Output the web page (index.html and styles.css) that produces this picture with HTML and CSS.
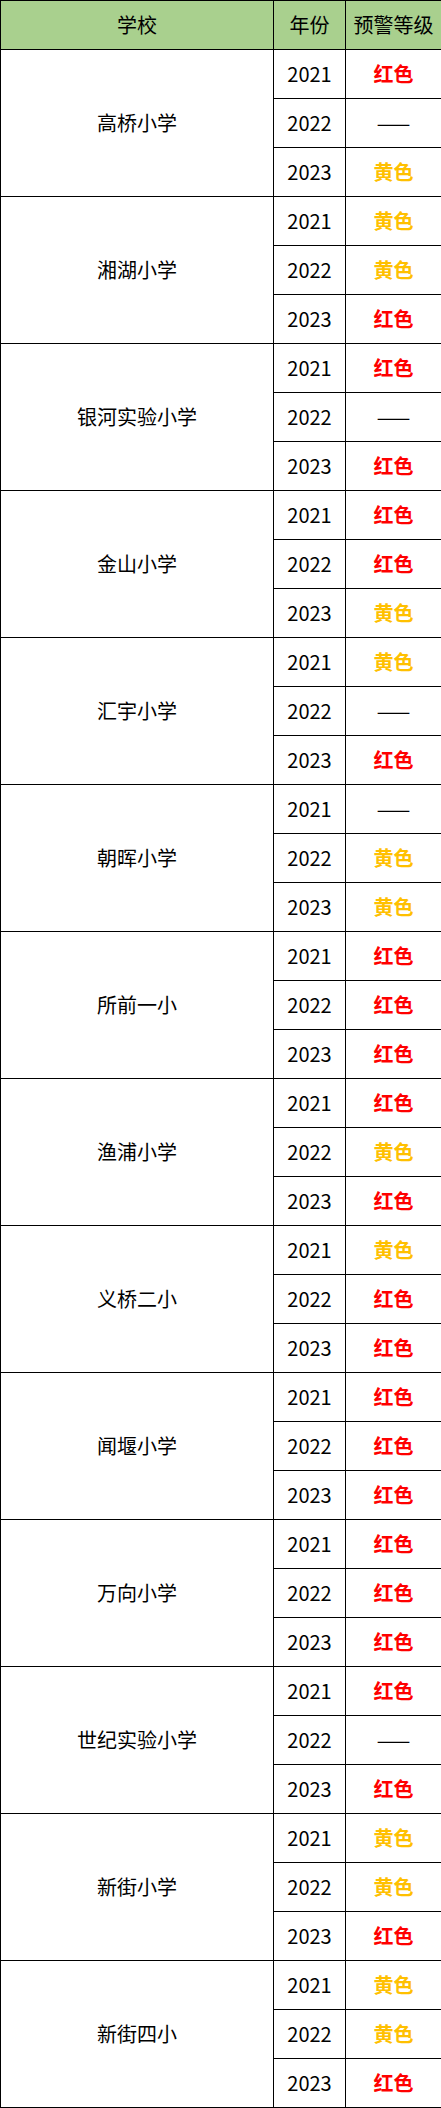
FILE: index.html
```html
<!DOCTYPE html>
<html lang="zh-CN">
<head>
<meta charset="utf-8">
<title>预警等级</title>
<link rel="stylesheet" href="styles.css">
</head>
<body>
<div class="sheet">
  <div class="cell head">学校</div>
  <div class="cell head">年份</div>
  <div class="cell head">预警等级</div>

  <div class="cell school">高桥小学</div>
  <div class="cell year">2021</div><div class="cell lvl red">红色</div>
  <div class="cell year">2022</div><div class="cell lvl none">——</div>
  <div class="cell year">2023</div><div class="cell lvl yellow">黄色</div>

  <div class="cell school">湘湖小学</div>
  <div class="cell year">2021</div><div class="cell lvl yellow">黄色</div>
  <div class="cell year">2022</div><div class="cell lvl yellow">黄色</div>
  <div class="cell year">2023</div><div class="cell lvl red">红色</div>

  <div class="cell school">银河实验小学</div>
  <div class="cell year">2021</div><div class="cell lvl red">红色</div>
  <div class="cell year">2022</div><div class="cell lvl none">——</div>
  <div class="cell year">2023</div><div class="cell lvl red">红色</div>

  <div class="cell school">金山小学</div>
  <div class="cell year">2021</div><div class="cell lvl red">红色</div>
  <div class="cell year">2022</div><div class="cell lvl red">红色</div>
  <div class="cell year">2023</div><div class="cell lvl yellow">黄色</div>

  <div class="cell school">汇宇小学</div>
  <div class="cell year">2021</div><div class="cell lvl yellow">黄色</div>
  <div class="cell year">2022</div><div class="cell lvl none">——</div>
  <div class="cell year">2023</div><div class="cell lvl red">红色</div>

  <div class="cell school">朝晖小学</div>
  <div class="cell year">2021</div><div class="cell lvl none">——</div>
  <div class="cell year">2022</div><div class="cell lvl yellow">黄色</div>
  <div class="cell year">2023</div><div class="cell lvl yellow">黄色</div>

  <div class="cell school">所前一小</div>
  <div class="cell year">2021</div><div class="cell lvl red">红色</div>
  <div class="cell year">2022</div><div class="cell lvl red">红色</div>
  <div class="cell year">2023</div><div class="cell lvl red">红色</div>

  <div class="cell school">渔浦小学</div>
  <div class="cell year">2021</div><div class="cell lvl red">红色</div>
  <div class="cell year">2022</div><div class="cell lvl yellow">黄色</div>
  <div class="cell year">2023</div><div class="cell lvl red">红色</div>

  <div class="cell school">义桥二小</div>
  <div class="cell year">2021</div><div class="cell lvl yellow">黄色</div>
  <div class="cell year">2022</div><div class="cell lvl red">红色</div>
  <div class="cell year">2023</div><div class="cell lvl red">红色</div>

  <div class="cell school">闻堰小学</div>
  <div class="cell year">2021</div><div class="cell lvl red">红色</div>
  <div class="cell year">2022</div><div class="cell lvl red">红色</div>
  <div class="cell year">2023</div><div class="cell lvl red">红色</div>

  <div class="cell school">万向小学</div>
  <div class="cell year">2021</div><div class="cell lvl red">红色</div>
  <div class="cell year">2022</div><div class="cell lvl red">红色</div>
  <div class="cell year">2023</div><div class="cell lvl red">红色</div>

  <div class="cell school">世纪实验小学</div>
  <div class="cell year">2021</div><div class="cell lvl red">红色</div>
  <div class="cell year">2022</div><div class="cell lvl none">——</div>
  <div class="cell year">2023</div><div class="cell lvl red">红色</div>

  <div class="cell school">新街小学</div>
  <div class="cell year">2021</div><div class="cell lvl yellow">黄色</div>
  <div class="cell year">2022</div><div class="cell lvl yellow">黄色</div>
  <div class="cell year">2023</div><div class="cell lvl red">红色</div>

  <div class="cell school">新街四小</div>
  <div class="cell year">2021</div><div class="cell lvl yellow">黄色</div>
  <div class="cell year">2022</div><div class="cell lvl yellow">黄色</div>
  <div class="cell year">2023</div><div class="cell lvl red">红色</div>
</div>
</body>
</html>
```

FILE: styles.css
```css
* { box-sizing: border-box; }
html, body { margin: 0; padding: 0; background: #fff; }
body {
  font-family: "Noto Sans CJK SC", "Noto Sans", sans-serif;
  color: #000;
}
.sheet {
  display: grid;
  grid-template-columns: 273px 72px 96px;
  grid-auto-rows: 49px;
  width: 441px;
  border-top: 1px solid #000;
  border-left: 1px solid #000;
}
.cell {
  display: flex;
  align-items: center;
  justify-content: center;
  border-right: 1px solid #000;
  border-bottom: 1px solid #000;
  font-size: 20px;
  line-height: 1;
  white-space: nowrap;
}
.head { background: #a9d08e; }
.school { grid-column: 1; grid-row: span 3; }
.year { grid-column: 2; }
.lvl { grid-column: 3; font-weight: bold; }
.red { color: #ff0000; }
.yellow { color: #ffc000; }
.none { font-weight: normal; }
```
